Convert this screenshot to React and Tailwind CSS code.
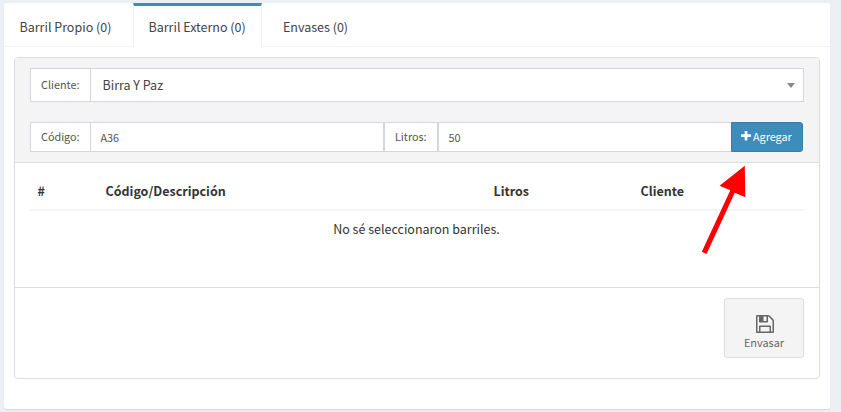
const PlusIcon = () => (
  <svg className="mr-[2px] h-[10px] w-[10px] shrink-0" viewBox="192 192 1408 1408" fill="currentColor">
    <path d="M1600 736v192q0 40-28 68t-68 28h-416v416q0 40-28 68t-68 28h-192q-40 0-68-28t-28-68v-416h-416q-40 0-68-28t-28-68v-192q0-40 28-68t68-28h416v-416q0-40 28-68t68-28h192q40 0 68 28t28 68v416h416q40 0 68 28t28 68z" />
  </svg>
);

const SaveIcon = () => (
  <svg className="ml-px h-[18px] w-[18px]" viewBox="0 0 1536 1536" fill="currentColor">
    <path
      fillRule="evenodd"
      d="M384 1408h768v-384h-768zM1280 1408h128v-896q0-14-10-38.500t-20-34.500l-281-281q-10-10-34-20t-39-10v416q0 40-28 68t-68 28h-576q-40 0-68-28t-28-68v-416h-128v1280h128v-416q0-40 28-68t68-28h832q40 0 68 28t28 68zM896 480v-320q0-13-9.500-22.500t-22.500-9.500h-192q-13 0-22.500 9.500t-9.500 22.500v320q0 13 9.500 22.500t22.500 9.500h192q13 0 22.500-9.500t9.500-22.500zM1536 512v928q0 40-28 68t-68 28h-1344q-40 0-68-28t-28-68v-1344q0-40 28-68t68-28h928q40 0 88 20t76 48l280 280q28 28 48 76t20 88z"
    />
  </svg>
);

const Addon = ({ children, className = "" }) => (
  <div className={`flex shrink-0 items-center border border-[#d2d6de] bg-white pb-[2px] pl-[10px] text-[10.8px] text-[#555] ${className}`}>
    {children}
  </div>
);

export default function App() {
  return (
    <div className="h-[412px] w-[841px] overflow-hidden bg-[#ecf0f5] pl-1 pt-[3px] font-['Noto_Sans_CJK_SC',sans-serif] text-[12.5px] leading-[18px] text-[#333]">
      <div className="relative h-[406px] w-[826px] rounded-[3px] bg-white shadow-[0_1px_1px_rgba(0,0,0,0.1)]">
        <nav className="flex h-11 border-b border-[#f4f4f4] text-[#444]">
          <div className="w-[129px] pl-[15.5px] pt-[15px]">Barril Propio (0)</div>
          <div className="h-[45px] w-[129px] border-x border-t-[3px] border-x-[#f4f4f4] border-t-[#3c8dbc] bg-white pl-[14.5px] pt-[12px]">
            Barril Externo (0)
          </div>
          <div className="pl-[21px] pt-[15px]">Envases (0)</div>
        </nav>

        <section className="ml-[10px] mt-[10px] h-[322px] w-[806px] overflow-hidden rounded-[4px] border border-[#ddd] bg-white">
          <div className="h-[105px] border-b border-[#ddd] bg-[#f4f4f4] px-[15px] pt-[10px]">
            <div className="flex h-[34px] w-[774px]">
              <Addon className="w-[60px] border-r-0">Cliente:</Addon>
              <div className="flex flex-1 items-center justify-between border border-[#d2d6de] bg-white pl-[11.5px] pr-[8px] text-[#444]">
                Birra Y Paz
                <svg className="h-[5px] w-[8px]" viewBox="0 0 8 5" fill="#888">
                  <path d="M0 0H8L4 5Z" />
                </svg>
              </div>
            </div>
            <div className="mt-5 flex h-[30px] w-[773px]">
              <Addon className="w-[60px] border-r-0">Código:</Addon>
              <div className="flex w-[294px] items-center border border-[#d2d6de] bg-white pl-[9.5px] text-[10.8px] text-[#555]">A36</div>
              <Addon className="w-[54px]">Litros:</Addon>
              <div className="flex w-[293px] items-center border border-r-0 border-[#d2d6de] bg-white pl-[9.5px] text-[10.8px] text-[#555]">50</div>
              <button className="flex w-[72px] items-center rounded-r-[3px] border border-[#367fa9] bg-[#3c8dbc] pb-[2px] pl-[9px] text-[10.8px] text-white">
                <PlusIcon />
                Agregar
              </button>
            </div>
          </div>

          <div className="h-[125px] border-b border-[#ddd] px-[15px] pt-[10px]">
            <div className="flex h-[38px] w-[774px] border-b-2 border-[#f4f4f4] pt-[9px] font-bold">
              <div className="w-[68px] pl-[7.5px]">#</div>
              <div className="w-[388px] pl-[7.5px]">Código/Descripción</div>
              <div className="w-[147px] pl-[7.5px]">Litros</div>
              <div className="pl-[7.5px]">Cliente</div>
            </div>
            <div className="w-[773px] pt-[9px] text-center">No sé seleccionaron barriles.</div>
          </div>

          <div className="flex justify-end pr-[15px] pt-[10px]">
            <button className="flex h-[60px] w-[80px] flex-col items-center rounded-[3px] border border-[#ddd] bg-[#f4f4f4] pt-4 text-[10.9px] text-[#666]">
              <SaveIcon />
              Envasar
            </button>
          </div>
        </section>

        <svg className="pointer-events-none absolute left-[692px] top-[157px]" width="60" height="100" viewBox="696 160 60 100">
          <path d="M744.800 165.700L745.300 197.300L734.800 192.800L706.500 254L701.800 251.800L730.300 190.300L719.500 185.700Z" fill="#ff0000" />
        </svg>
      </div>
    </div>
  );
}
